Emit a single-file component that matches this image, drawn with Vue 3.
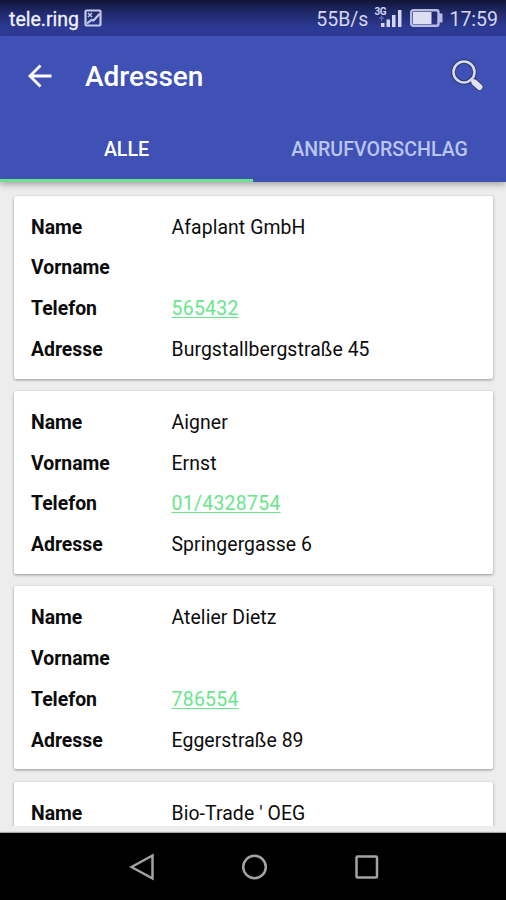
<template>
  <div class="phone">
    <div class="status-bar">
      <span class="carrier">tele.ring</span>
      <svg class="picture-icon" width="18" height="18" viewBox="0 0 18 18" fill="none" stroke="#c3c8e6" stroke-width="2.200">
        <rect x="1.500" y="1.500" width="15" height="15" rx="1" />
        <path d="M3 14.500L7.500 11L9.500 11.500L15.500 5" />
        <path d="M4 4l4 4M8 4l-4 4" stroke-width="1.500" />
      </svg>
      <span class="speed">55B/s</span>
      <svg class="signal-icon" width="29" height="24" viewBox="0 0 29 24">
        <text x="0.500" y="8.500" font-size="10" font-weight="700" textLength="12">3G</text>
        <path d="M7 17h3.500v4H7zM12.500 13.500H16V21h-3.500zM18 9h3.500v12H18zM24 4h3.500v17H24z" />
        <path d="M5 12h5M7.500 10v5" stroke="#6f78b8" stroke-width="1" />
      </svg>
      <svg class="battery-icon" width="33" height="18" viewBox="0 0 33 18">
        <rect x="1.200" y="1.200" width="27.300" height="15.600" rx="2" fill="none" stroke="#b7bde0" stroke-width="2.400" />
        <rect x="3" y="3" width="18.500" height="12" fill="#dcdef2" />
        <path d="M29 4.500h3.500v9H29z" fill="#b7bde0" />
      </svg>
      <span class="clock">17:59</span>
    </div>

    <header class="app-bar">
      <div class="toolbar">
        <svg class="back-icon" width="24" height="24" viewBox="0 0 24 24" fill="none" stroke="#fff" stroke-width="2.800">
          <path d="M23.500 12H2.500M12.500 1.500L2 12l10.500 10.500" />
        </svg>
        <h1>Adressen</h1>
        <svg class="search-icon" width="34" height="34" viewBox="0 0 34 34" fill="none" stroke-linecap="round">
          <circle cx="13" cy="13" r="10.500" stroke="#2c356f" stroke-width="4.400" />
          <path d="M21 21L28.500 28" stroke="#2c356f" stroke-width="7.500" />
          <circle cx="13" cy="13" r="10.500" stroke="#d6dbed" stroke-width="2.600" />
          <path d="M20.500 20.500L24 24" stroke="#d6dbed" stroke-width="3" />
          <path d="M23.500 23.500L28.500 28" stroke="#dfe3f2" stroke-width="6" />
        </svg>
      </div>
      <nav class="tabs">
        <button
          v-for="(tab, i) in tabs"
          :key="tab"
          :class="{ active: i === current }"
          @click="current = i"
        >{{ tab }}</button>
      </nav>
    </header>

    <main class="list">
      <section v-for="a in addresses" :key="a.name" class="card">
        <dl>
          <dt>Name</dt>
          <dd>{{ a.name }}</dd>
          <template v-if="a.street">
            <dt>Vorname</dt>
            <dd>{{ a.firstName }}</dd>
            <dt>Telefon</dt>
            <dd><a :href="'tel:' + a.phone">{{ a.phone }}</a></dd>
            <dt>Adresse</dt>
            <dd>{{ a.street }}</dd>
          </template>
        </dl>
      </section>
    </main>

    <footer class="nav-bar">
      <svg width="26" height="28" viewBox="0 0 26 28"><path d="M23.500 2.500v23L2.500 14z" /></svg>
      <svg width="26" height="28" viewBox="0 0 26 28"><circle cx="12.500" cy="14" r="11.300" /></svg>
      <svg width="26" height="28" viewBox="0 0 26 28"><rect x="2.500" y="3.500" width="20.500" height="21" rx="1" /></svg>
    </footer>
  </div>
</template>

<script setup>
import { ref } from 'vue'

const tabs = ['ALLE', 'ANRUFVORSCHLAG']
const current = ref(0)

const addresses = ref([
  { name: 'Afaplant GmbH', firstName: '', phone: '565432', street: 'Burgstallbergstraße 45' },
  { name: 'Aigner', firstName: 'Ernst', phone: '01/4328754', street: 'Springergasse 6' },
  { name: 'Atelier Dietz', firstName: '', phone: '786554', street: 'Eggerstraße 89' },
  { name: "Bio-Trade ' OEG" }
])
</script>

<style>
body {
  margin: 0;
  overflow: hidden;
}
</style>

<style scoped>
.phone {
  display: flex;
  flex-direction: column;
  width: 506px;
  height: 900px;
  overflow: hidden;
  background: #ededed;
  font-family: Roboto, "Liberation Sans", sans-serif;
}

.status-bar {
  display: flex;
  align-items: center;
  flex: none;
  box-sizing: border-box;
  height: 36px;
  padding: 2px 8px 0 9px;
  background: linear-gradient(#111637 0, #20296b 35%, #2c3992 75%, #2f3d9b 100%);
  color: #d3d6ee;
  font-size: 19.500px;
}
.carrier {
  color: #f0f1fb;
  -webkit-text-stroke: 0.300px;
}
.picture-icon {
  margin: -2px auto 0 5px;
}
.signal-icon {
  margin: -2px 7px 0 6px;
  fill: #d3d6ee;
}
.battery-icon {
  margin: -2px 6px 0 0;
}

.app-bar {
  position: relative;
  z-index: 1;
  flex: none;
  height: 145.500px;
  background: #3f51b5;
  box-shadow: 0 2px 7px rgba(0, 0, 0, 0.35);
}
.toolbar {
  display: flex;
  align-items: center;
  height: 79px;
  padding: 0 21px 0 28px;
}
h1 {
  flex: 1;
  margin: 1px 0 0 33px;
  color: #fff;
  font-size: 28px;
  font-weight: 500;
}
.tabs {
  display: flex;
  height: 66.500px;
}
.tabs button {
  flex: 1;
  padding: 5px 0 0;
  border: 0;
  border-bottom: 3px solid transparent;
  background: none;
  color: #bcc5ef;
  font: 500 19.600px Roboto, "Liberation Sans", sans-serif;
}
.tabs .active {
  color: #fff;
  border-bottom-color: #69e28d;
}

.list {
  flex: none;
  box-sizing: border-box;
  height: 644.500px;
  padding: 14px 13px 0 14px;
  overflow: hidden;
}
.card {
  box-sizing: border-box;
  height: 183px;
  margin-bottom: 12.400px;
  padding: 12.100px 17px 0;
  border-radius: 2px;
  background: #fff;
  box-shadow: 0 1px 3px rgba(0, 0, 0, 0.38);
}
dl {
  display: grid;
  grid-template-columns: 140.500px 1fr;
  grid-auto-rows: 40.750px;
  margin: 0;
  color: #0c0c0c;
  font-size: 19.400px;
  line-height: 40.750px;
}
dt {
  font-weight: 700;
}
dd {
  margin: 0;
  letter-spacing: 0.080px;
}
a {
  color: #69e68b;
  letter-spacing: 0.300px;
  text-underline-offset: 2px;
  text-decoration-thickness: 1px;
}

.nav-bar {
  display: flex;
  align-items: center;
  justify-content: space-between;
  box-sizing: border-box;
  height: 67px;
  margin-top: auto;
  padding: 0 126px 0 129px;
  background: #000;
  box-shadow: 0 -1px 1px #aaa;
}
.nav-bar svg {
  fill: none;
  stroke: #a3a3a3;
  stroke-width: 2.500;
}
</style>
